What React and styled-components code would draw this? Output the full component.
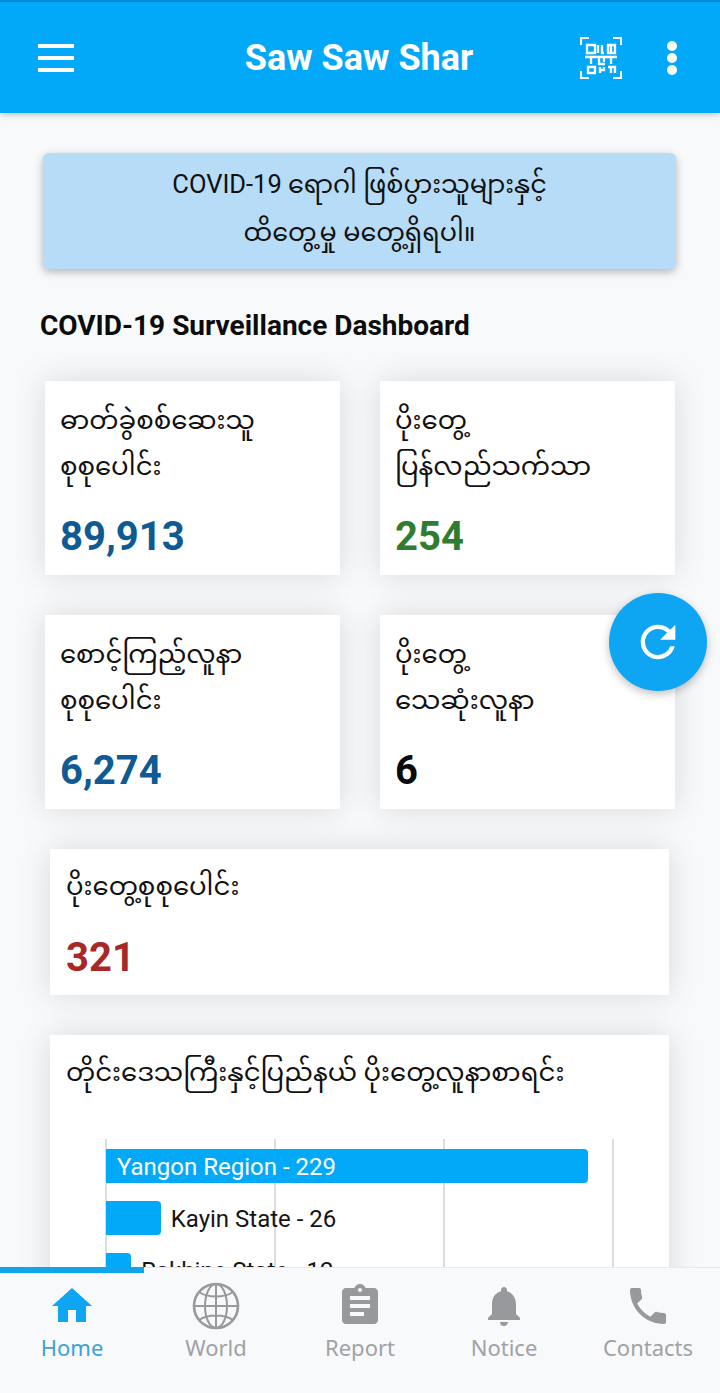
import * as React from "react"
import styled, { createGlobalStyle } from "styled-components"
import { MdHome, MdAssignment, MdNotifications, MdPhone, MdRefresh } from "react-icons/md"

const Global = createGlobalStyle`
  html, body { margin: 0; padding: 0; background: #f8f9fb; }
  * { box-sizing: border-box; }
`

const MM = `Roboto, "Noto Sans Myanmar", "Noto Sans", "DejaVu Sans", sans-serif`

const Screen = styled.div`
  position: relative;
  width: 720px;
  height: 1393px;
  display: flex;
  flex-direction: column;
  overflow: hidden;
  background: #f8f9fb;
  font-family: ${MM};
`

const Header = styled.header`
  height: 113px;
  flex: none;
  display: flex;
  align-items: center;
  padding: 0 43px 0 38px;
  background: #03a9f9;
  border-top: 2px solid #0b87dc;
  box-shadow: 0 2px 6px rgba(0, 0, 0, 0.22);
  position: relative;
  z-index: 2;
`

const Title = styled.h1`
  flex: 1;
  margin: 0;
  padding-left: 64px;
  text-align: center;
  color: #fff;
  font: 700 36px Roboto, sans-serif;
`

const HeaderActions = styled.div`
  display: flex;
  align-items: center;
  gap: 45px;
`

const Scroll = styled.main`
  flex: 1;
  min-height: 0;
  overflow: hidden;
  padding-top: 40px;
`

const Banner = styled.div`
  margin: 0 44px 0 43px;
  height: 116px;
  padding-top: 8px;
  border-radius: 6px;
  background: #b7dcf8;
  box-shadow: 0 3px 8px rgba(0, 0, 0, 0.28);
  text-align: center;
  font-size: 25.5px;
  line-height: 47.5px;
  color: #111;
`

const DashTitle = styled.h2`
  margin: 38px 0 36px 40px;
  font: 700 28px/38px Roboto, sans-serif;
  color: #0c0c0c;
`

const Grid = styled.section`
  display: grid;
  grid-template-columns: 295px 295px;
  grid-auto-rows: 194px;
  gap: 40px;
  padding-left: 45px;
`

const Card = styled.div`
  background: #fff;
  padding: 16px 15px 0;
  box-shadow: 0 0 30px rgba(0, 0, 0, 0.13);
`

const CardLabel = styled.div`
  font-size: 26px;
  line-height: 46px;
  color: #111;
  white-space: nowrap;
`

const CardValue = styled.div`
  margin-top: 24px;
  font: 700 40px/48px Roboto, sans-serif;
  color: ${({ $color }) => $color};
`

const WideCard = styled(Card)`
  margin: 40px 51px 0 50px;
  padding: 14px 15px 0 16px;
  height: ${({ $height }) => ($height ? `${$height}px` : "auto")};

  ${CardValue} {
    margin-top: 25px;
  }
`

const Chart = styled.div`
  margin: 44px 0 0 39px;
  width: 510px;
  height: 220px;
  padding: 10px 0 0 1px;
  display: flex;
  flex-direction: column;
  gap: 18px;
  background: repeating-linear-gradient(90deg, #dcdcdc 0 2px, transparent 2px 169px);
`

const BarRow = styled.div`
  display: flex;
  align-items: center;
  height: 34px;
  gap: 10px;
  font: 400 24px Roboto, sans-serif;
  color: #151515;
`

const BarLabel = styled.span`
  padding-top: 2px;
`

const Bar = styled.div`
  height: 34px;
  flex: none;
  padding-left: 11px;
  line-height: 36px;
  color: #fff;
  white-space: nowrap;
  background: #03a9f9;
  border-radius: 0 4px 4px 0;
`

const BottomNav = styled.nav`
  position: relative;
  z-index: 3;
  height: 126px;
  flex: none;
  display: grid;
  grid-template-columns: repeat(5, 144px);
  background: #f8f9fb;
  border-top: 1px solid #e8e9eb;
`

const Progress = styled.div`
  position: absolute;
  left: 0;
  top: -1px;
  width: 144px;
  height: 6px;
  background: #0fa5e9;
`

const NavItem = styled.div`
  display: flex;
  flex-direction: column;
  align-items: center;
  padding-top: 14px;
  color: ${({ $active }) => ($active ? "#0ea5f3" : "#97999c")};
  font: 400 22px/30px "Noto Sans", sans-serif;
`

const NavLabel = styled.span`
  margin-top: 2px;
  color: ${({ $active }) => ($active ? "#3ba3d6" : "#a0a2a5")};
`

const Fab = styled.button`
  position: absolute;
  left: 609px;
  top: 593px;
  width: 98px;
  height: 98px;
  padding: 0;
  border: 0;
  border-radius: 50%;
  display: flex;
  align-items: center;
  justify-content: center;
  color: #fff;
  background: #0ea5f3;
  box-shadow: 0 3px 8px rgba(0, 0, 0, 0.25);
  z-index: 4;
`

const MenuIcon = () => (
  <svg width="36" height="28" viewBox="0 0 36 28" fill="#fff">
    <rect y="0" width="36" height="4" />
    <rect y="12" width="36" height="4" />
    <rect y="24" width="36" height="4" />
  </svg>
)

const DotsIcon = () => (
  <svg width="10" height="34" viewBox="0 0 10 34" fill="#fff">
    <circle cx="5" cy="5" r="5" />
    <circle cx="5" cy="17" r="5" />
    <circle cx="5" cy="29" r="5" />
  </svg>
)

const QrIcon = () => (
  <svg width="42" height="42" viewBox="0 0 42 42" fill="none" stroke="#fff" strokeWidth="2">
    <path d="M1 8V1h8M33 1h8v7M1 34v7h8M41 34v7h-8" />
    <path
      d="M7 8h8v8H7zM18 8v8M22 8v8h2M28 8h7v8h-7zM31 8v8M5 20h32M11 20v7M19 20v7h6M24 20v5M31 20v7M8 30h7v6H8zM20 30v6M24 30v3h-4M28 30h7v6M31 30v6"
      strokeWidth="2.3"
    />
  </svg>
)

const GlobeIcon = () => (
  <svg width="48" height="48" viewBox="0 0 48 48" fill="none" stroke="#97999c" strokeWidth="2">
    <circle cx="24" cy="24" r="22" strokeWidth="2.6" />
    <ellipse cx="24" cy="24" rx="11" ry="22" />
    <path d="M24 2v44M2 24h44M7 10c9 6 25 6 34 0M7 38c9-6 25-6 34 0" />
  </svg>
)

const navItems = [
  { label: "Home", icon: <MdHome size={48} />, active: true },
  { label: "World", icon: <GlobeIcon /> },
  { label: "Report", icon: <MdAssignment size={48} /> },
  { label: "Notice", icon: <MdNotifications size={48} /> },
  { label: "Contacts", icon: <MdPhone size={48} /> },
]

const stats = [
  { lines: ["ဓာတ်ခွဲစစ်ဆေးသူ", "စုစုပေါင်း"], value: "89,913", color: "#0d5a94" },
  { lines: ["ပိုးတွေ့", "ပြန်လည်သက်သာ"], value: "254", color: "#2e7d32" },
  { lines: ["စောင့်ကြည့်လူနာ", "စုစုပေါင်း"], value: "6,274", color: "#0d5a94" },
  { lines: ["ပိုးတွေ့", "သေဆုံးလူနာ"], value: "6", color: "#0a0a0a" },
]

const regions = [
  { name: "Yangon Region", count: 229 },
  { name: "Kayin State", count: 26 },
  { name: "Rakhine State", count: 12 },
]

export default function App() {
  return (
    <Screen>
      <Global />
      <Header>
        <MenuIcon />
        <Title>Saw Saw Shar</Title>
        <HeaderActions>
          <QrIcon />
          <DotsIcon />
        </HeaderActions>
      </Header>

      <Scroll>
        <Banner>
          COVID-19 ရောဂါ ဖြစ်ပွားသူများနှင့်
          <br />
          ထိတွေ့မှု မတွေ့ရှိရပါ။
        </Banner>
        <DashTitle>COVID-19 Surveillance Dashboard</DashTitle>

        <Grid>
          {stats.map((s, i) => (
            <Card key={i}>
              <CardLabel>
                {s.lines[0]}
                <br />
                {s.lines[1]}
              </CardLabel>
              <CardValue $color={s.color}>{s.value}</CardValue>
            </Card>
          ))}
        </Grid>

        <WideCard $height={146}>
          <CardLabel>ပိုးတွေ့စုစုပေါင်း</CardLabel>
          <CardValue $color="#a82828">321</CardValue>
        </WideCard>

        <WideCard>
          <CardLabel>တိုင်းဒေသကြီးနှင့်ပြည်နယ် ပိုးတွေ့လူနာစာရင်း</CardLabel>
          <Chart>
            {regions.map((r) => {
              const label = `${r.name} - ${r.count}`
              const wide = r.count > 100
              return (
                <BarRow key={r.name}>
                  <Bar style={{ width: r.count * 2.105 }}>{wide ? label : ""}</Bar>
                  {!wide && <BarLabel>{label}</BarLabel>}
                </BarRow>
              )
            })}
          </Chart>
        </WideCard>
      </Scroll>

      <Fab aria-label="refresh">
        <MdRefresh size={52} />
      </Fab>

      <BottomNav>
        <Progress />
        {navItems.map((n) => (
          <NavItem key={n.label} $active={n.active}>
            {n.icon}
            <NavLabel $active={n.active}>{n.label}</NavLabel>
          </NavItem>
        ))}
      </BottomNav>
    </Screen>
  )
}
